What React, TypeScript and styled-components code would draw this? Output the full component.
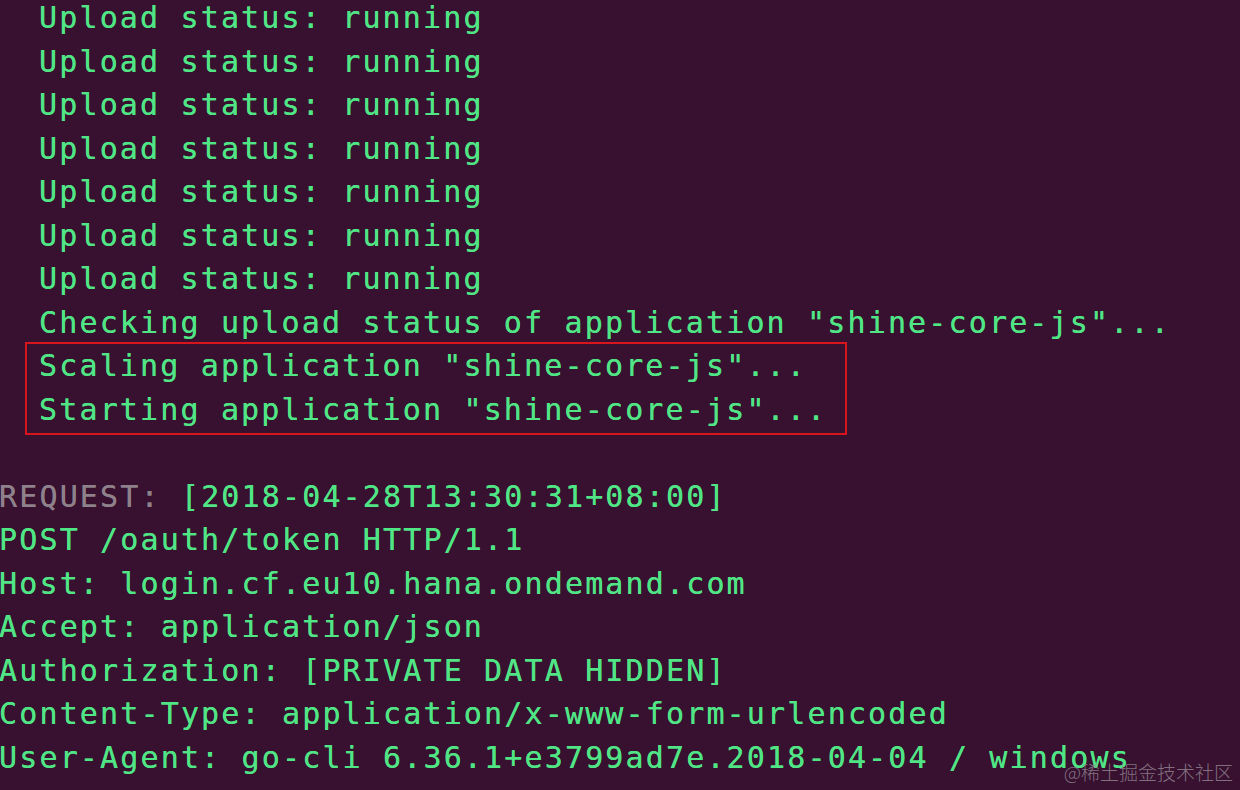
import React from "react";
import styled, { createGlobalStyle } from "styled-components";

const Global = createGlobalStyle`
  html, body { margin: 0; padding: 0; background: #381130; }
  body { width: 1240px; height: 790px; overflow: hidden; }
`;

const Screen = styled.div`
  position: relative;
  width: 1240px;
  height: 790px;
  background: #381130;
  overflow: hidden;
`;

const Output = styled.div`
  display: flex;
  flex-direction: column;
  margin-top: -4px;
  margin-left: -1px;
  font-family: "DejaVu Sans Mono", "Liberation Mono", monospace;
  font-size: 30px;
  letter-spacing: 2.15px;
  line-height: 43.5px;
  color: #50e585;
  text-shadow: 0 0 0.6px #50e585;
  white-space: pre;
`;

const Line = styled.div<{ $indent?: boolean }>`
  height: 43.5px;
  padding-left: ${(p) => (p.$indent ? "40px" : "0")};
`;

const Dim = styled.span`
  color: #8e818b;
  text-shadow: 0 0 0.6px #8e818b;
`;

const Highlight = styled.div`
  position: relative;
  display: flex;
  flex-direction: column;
  &::after {
    content: "";
    position: absolute;
    left: 26px;
    top: -2px;
    width: 822px;
    height: 93px;
    box-sizing: border-box;
    border: 2px solid #d8141c;
    pointer-events: none;
  }
`;

const Watermark = styled.div`
  position: absolute;
  right: 7px;
  bottom: 5px;
  font-family: "Noto Sans CJK SC", "Noto Sans", sans-serif;
  font-size: 19px;
  font-weight: 300;
  line-height: 26px;
  color: rgba(150, 138, 150, 0.8);
`;

const uploads = Array.from({ length: 7 }, () => "Upload status: running");

export default function App() {
  return (
    <Screen>
      <Global />
      <Output>
        {uploads.map((t, i) => (
          <Line key={i} $indent>
            {t}
          </Line>
        ))}
        <Line $indent>Checking upload status of application "shine-core-js"...</Line>
        <Highlight>
          <Line $indent>Scaling application "shine-core-js"...</Line>
          <Line $indent>Starting application "shine-core-js"...</Line>
        </Highlight>
        <Line />
        <Line>
          <Dim>REQUEST:</Dim> [2018-04-28T13:30:31+08:00]
        </Line>
        <Line>POST /oauth/token HTTP/1.1</Line>
        <Line>Host: login.cf.eu10.hana.ondemand.com</Line>
        <Line>Accept: application/json</Line>
        <Line>Authorization: [PRIVATE DATA HIDDEN]</Line>
        <Line>Content-Type: application/x-www-form-urlencoded</Line>
        <Line>User-Agent: go-cli 6.36.1+e3799ad7e.2018-04-04 / windows</Line>
      </Output>
      <Watermark>@稀土掘金技术社区</Watermark>
    </Screen>
  );
}
